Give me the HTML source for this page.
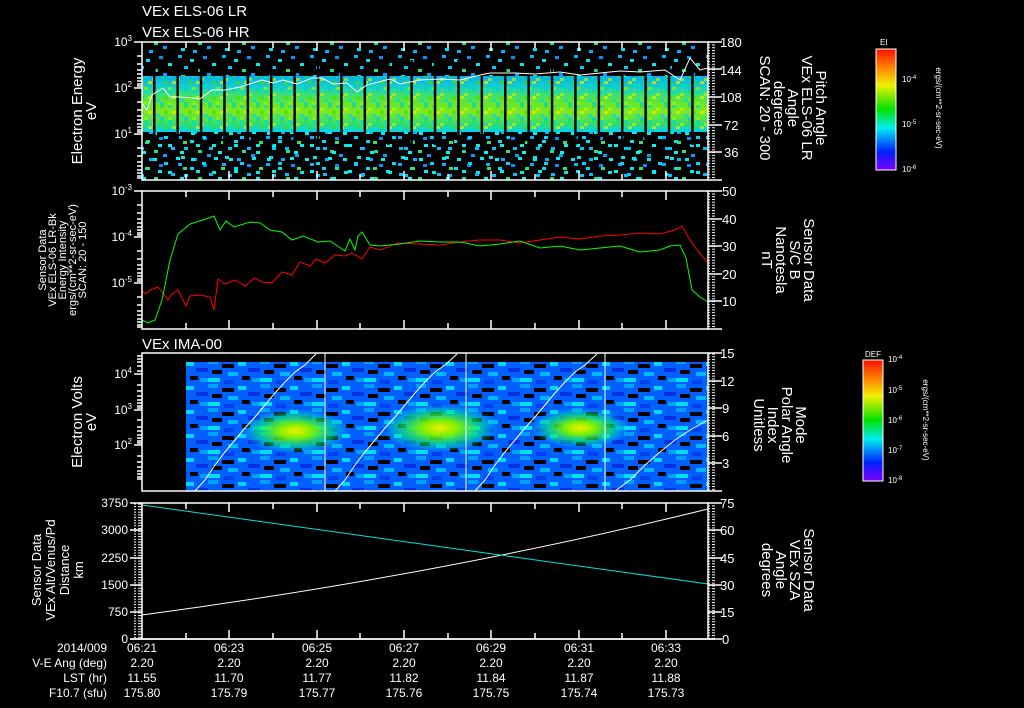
<!DOCTYPE html>
<html><head><meta charset="utf-8"><style>
html,body{margin:0;padding:0;background:#000;width:1024px;height:708px;overflow:hidden}
svg{display:block}
text{font-family:"Liberation Sans",sans-serif;fill:#fff}
</style></head><body>
<svg width="1024" height="708" viewBox="0 0 1024 708" xmlns="http://www.w3.org/2000/svg">
<defs>
<pattern id="spk" width="44" height="27" patternUnits="userSpaceOnUse">
<rect x="2" y="1" width="4" height="3" fill="#00b4ff"/><rect x="14" y="5" width="4" height="3" fill="#00e0f0"/>
<rect x="27" y="2" width="4" height="3" fill="#0090ff"/><rect x="36" y="9" width="4" height="3" fill="#00f0e0"/>
<rect x="8" y="12" width="4" height="3" fill="#00c8ff"/><rect x="22" y="15" width="4" height="3" fill="#20e080"/>
<rect x="31" y="19" width="4" height="3" fill="#00a0ff"/><rect x="5" y="21" width="4" height="3" fill="#00e8e8"/>
<rect x="17" y="23" width="4" height="3" fill="#00b0ff"/>
</pattern>
<pattern id="spk2" width="38" height="26" patternUnits="userSpaceOnUse">
<rect x="1" y="2" width="4" height="3" fill="#00f0f0"/><rect x="12" y="6" width="4" height="3" fill="#00d8ff"/>
<rect x="24" y="1" width="4" height="3" fill="#00f0e8"/><rect x="31" y="11" width="4" height="3" fill="#30e070"/>
<rect x="6" y="14" width="4" height="3" fill="#00f0f0"/><rect x="19" y="17" width="4" height="3" fill="#00c0ff"/>
<rect x="28" y="21" width="4" height="3" fill="#00f8f0"/>
</pattern>
<linearGradient id="band" x1="0" y1="0" x2="0" y2="1">
<stop offset="0" stop-color="#00b0f0"/><stop offset="0.25" stop-color="#20d8b0"/><stop offset="0.45" stop-color="#60e830"/>
<stop offset="0.65" stop-color="#80e820"/><stop offset="0.85" stop-color="#30e070"/><stop offset="1" stop-color="#00d0f0"/>
</linearGradient>
<pattern id="gspk" width="24" height="15" patternUnits="userSpaceOnUse">
<rect x="0" y="0" width="4" height="3" fill="#00e0c0"/><rect x="8" y="3" width="4" height="3" fill="#c0f000"/>
<rect x="16" y="0" width="4" height="3" fill="#20d860"/><rect x="4" y="6" width="4" height="3" fill="#e0f000"/>
<rect x="12" y="9" width="4" height="3" fill="#00d8e0"/><rect x="20" y="6" width="4" height="3" fill="#40e000"/>
<rect x="0" y="12" width="4" height="3" fill="#a0f000"/><rect x="16" y="12" width="4" height="3" fill="#00c8f0"/>
</pattern>
<pattern id="stripe" width="23.4" height="10" patternUnits="userSpaceOnUse" x="153">
<rect x="0" y="0" width="2.5" height="10" fill="#000"/>
</pattern>
<pattern id="ima" width="52" height="24" patternUnits="userSpaceOnUse">
<rect width="52" height="24" fill="#0060ff"/>
<rect x="0" y="0" width="10" height="4" fill="#00a0ff"/><rect x="14" y="4" width="12" height="4" fill="#000"/>
<rect x="30" y="2" width="8" height="4" fill="#00d8ff"/><rect x="40" y="8" width="12" height="4" fill="#0030e0"/>
<rect x="4" y="10" width="10" height="4" fill="#000"/><rect x="20" y="12" width="10" height="4" fill="#00b8ff"/>
<rect x="34" y="16" width="8" height="4" fill="#000"/><rect x="0" y="18" width="12" height="4" fill="#00e0f0"/>
<rect x="16" y="20" width="10" height="4" fill="#0040f0"/><rect x="44" y="18" width="8" height="4" fill="#00a0ff"/>
</pattern>
<radialGradient id="blob">
<stop offset="0" stop-color="#f0f000"/><stop offset="0.3" stop-color="#80f000"/><stop offset="0.7" stop-color="#00f080" stop-opacity="0.6"/><stop offset="1" stop-color="#00e0ff" stop-opacity="0"/>
</radialGradient>
<linearGradient id="cbar" x1="0" y1="0" x2="0" y2="1">
<stop offset="0" stop-color="#ff1000"/><stop offset="0.15" stop-color="#ff8000"/><stop offset="0.3" stop-color="#f0f000"/>
<stop offset="0.5" stop-color="#00e000"/><stop offset="0.65" stop-color="#00f0f0"/><stop offset="0.85" stop-color="#0020ff"/><stop offset="1" stop-color="#8000ff"/>
</linearGradient>
<pattern id="rt" width="8" height="2.76" patternUnits="userSpaceOnUse" y="0.3">
<rect x="0" y="0" width="6" height="1" fill="#fff"/>
</pattern>
<pattern id="lt" width="8" height="2.72" patternUnits="userSpaceOnUse" y="0.3">
<rect x="2" y="0" width="6" height="1" fill="#fff"/>
</pattern>
</defs>

<text x="142" y="16" font-size="15">VEx ELS-06 LR</text>
<text x="142" y="37" font-size="15">VEx ELS-06 HR</text>

<!-- PANEL 1 -->
<rect x="142" y="42" width="566" height="138" fill="url(#spk)"/>
<rect x="142" y="118" width="566" height="62" fill="url(#spk2)"/>
<rect x="142" y="76" width="566" height="56" fill="url(#band)"/>
<rect x="142" y="76" width="566" height="56" fill="url(#gspk)" opacity="0.7"/>
<rect x="142" y="60" width="566" height="85" fill="url(#stripe)"/>
<polyline fill="none" stroke="#fff" stroke-width="1" points="142,103 147,110 152,95 163,88 170,97 180,97 193,98 200,99 212,90 225,90 240,87 262,80 273,83 283,80 297,84 312,78 322,78 333,84 347,83 357,92 367,85 390,79 400,84 420,80 440,79 460,80 480,75 490,73 515,73 535,74 560,72 580,75 600,73 620,71 640,72 665,70 680,80 690,58 700,70 708,68"/>
<rect x="142" y="42" width="566" height="138" fill="none" stroke="#fff" stroke-width="1.5"/>

<!-- PANEL 2 -->
<polyline fill="none" stroke="#f00" stroke-width="1" points="142,291 146,294 150,290 158,287 162,292 168,300 172,294 178,290 186,306 190,296 200,295 210,297 214,310 218,279 225,284 235,280 245,286 255,278 262,282 272,283 282,272 292,275 300,262 310,266 316,259 325,263 335,255 345,256 352,253 362,259 370,247 380,250 398,243 420,244 440,245 460,242 480,240 500,240 520,243 540,240 560,237 580,239 600,236 620,235 640,233 660,234 675,230 682,226 690,240 697,250 708,263"/>
<polyline fill="none" stroke="#0f0" stroke-width="1" points="142,320 148,323 155,320 162,300 170,260 178,234 190,224 206,219 214,216 220,230 226,221 234,227 250,222 260,223 270,230 282,232 292,240 303,236 318,242 330,241 345,251 350,239 355,250 358,236 362,232 370,245 380,246 400,244 420,241 440,242 460,242 480,246 500,244 520,241 540,248 560,246 580,250 600,248 620,246 640,252 660,250 670,246 680,245 686,258 692,290 700,297 708,302"/>
<rect x="142" y="191" width="566" height="138" fill="none" stroke="#fff" stroke-width="1.5"/>

<!-- PANEL 3 -->
<text x="142" y="349" font-size="15">VEx IMA-00</text>
<rect x="186" y="362" width="522" height="129" fill="url(#ima)"/>
<ellipse cx="295" cy="431" rx="55" ry="22" fill="url(#blob)"/>
<ellipse cx="440" cy="428" rx="60" ry="24" fill="url(#blob)"/>
<ellipse cx="580" cy="428" rx="50" ry="20" fill="url(#blob)"/>
<line x1="325" y1="353" x2="325" y2="491" stroke="#fff"/>
<line x1="466" y1="353" x2="466" y2="491" stroke="#fff"/>
<line x1="605" y1="353" x2="605" y2="491" stroke="#fff"/>
<polyline fill="none" stroke="#fff" points="195,491 205,480 215,465 225,452 235,440 245,428 255,417 265,405 275,393 285,382 295,372 305,365 316,354"/>
<polyline fill="none" stroke="#fff" points="335,491 345,480 355,465 365,452 375,440 385,428 395,417 405,405 415,393 425,382 435,372 445,365 457,354"/>
<polyline fill="none" stroke="#fff" points="475,491 485,480 495,465 505,452 515,440 525,428 535,417 545,405 555,393 565,382 575,372 585,365 597,354"/>
<polyline fill="none" stroke="#fff" points="615,491 630,480 645,465 660,452 675,440 690,430 708,420"/>
<rect x="142" y="353" width="566" height="138" fill="none" stroke="#fff" stroke-width="1.5"/>

<!-- PANEL 4 -->
<path d="M142,615 Q440,575 708,509" fill="none" stroke="#fff"/>
<path d="M142,505 Q430,545 708,584" fill="none" stroke="#00e0e0"/>
<rect x="142" y="503" width="566" height="136" fill="none" stroke="#fff" stroke-width="1.5"/>
<rect x="134" y="503" width="8" height="136" fill="url(#lt)"/>

<!-- right minor ticks -->
<rect x="708" y="42" width="7" height="138" fill="url(#rt)"/>
<rect x="708" y="191" width="7" height="138" fill="url(#rt)"/>
<rect x="708" y="353" width="7" height="138" fill="url(#rt)"/>
<rect x="708" y="503" width="7" height="136" fill="url(#rt)"/>

<g stroke="#fff" stroke-width="1.5">
<path d="M186,42v6M229,42v9M273,42v6M317,42v9M360,42v6M404,42v9M448,42v6M491,42v9M535,42v6M579,42v9M622,42v6M666,42v9
M186,180v-6M229,180v-9M273,180v-6M317,180v-9M360,180v-6M404,180v-9M448,180v-6M491,180v-9M535,180v-6M579,180v-9M622,180v-6M666,180v-9"/>
<path d="M186,191v6M229,191v9M273,191v6M317,191v9M360,191v6M404,191v9M448,191v6M491,191v9M535,191v6M579,191v9M622,191v6M666,191v9
M186,329v-6M229,329v-9M273,329v-6M317,329v-9M360,329v-6M404,329v-9M448,329v-6M491,329v-9M535,329v-6M579,329v-9M622,329v-6M666,329v-9"/>
<path d="M186,503v6M229,503v9M273,503v6M317,503v9M360,503v6M404,503v9M448,503v6M491,503v9M535,503v6M579,503v9M622,503v6M666,503v9
M186,639v-6M229,639v-9M273,639v-6M317,639v-9M360,639v-6M404,639v-9M448,639v-6M491,639v-9M535,639v-6M579,639v-9M622,639v-6M666,639v-9"/>
<path d="M134,42h8M134,88h8M134,134h8M137,56h5M137,64h5M137,70h5M137,74h5M137,78h5M137,81h5M137,84h5M137,86h5M137,102h5M137,110h5M137,116h5M137,120h5M137,124h5M137,127h5M137,130h5M137,132h5M137,148h5M137,156h5M137,162h5M137,166h5M137,170h5M137,173h5M137,176h5M137,178h5"/>
<path d="M134,191h8M134,237h8M134,283h8M137,205h5M137,213h5M137,219h5M137,223h5M137,227h5M137,230h5M137,233h5M137,235h5M137,251h5M137,259h5M137,265h5M137,269h5M137,273h5M137,276h5M137,279h5M137,281h5M137,297h5M137,305h5M137,311h5M137,315h5M137,319h5M137,322h5M137,325h5M137,327h5"/>
<path d="M134,374h8M134,410h8M134,445h8M137,356h5M137,359h5M137,362h5M137,366h5M137,371h5M137,385h5M137,391h5M137,396h5M137,400h5M137,403h5M137,406h5M137,408h5M137,420h5M137,427h5M137,431h5M137,435h5M137,438h5M137,441h5M137,443h5M137,456h5M137,462h5M137,467h5M137,471h5M137,474h5M137,477h5M137,479h5"/>
<path d="M130,503h12M130,530h12M130,558h12M130,585h12M130,612h12M130,639h12"/>
<path d="M708,42h14M708,69h14M708,97h14M708,125h14M708,152h14M708,180h14"/>
<path d="M708,191h14M708,219h14M708,246h14M708,274h14M708,301h14M708,329h14"/>
<path d="M708,353h14M708,381h14M708,408h14M708,436h14M708,463h14M708,491h14"/>
<path d="M708,503h14M708,530h14M708,558h14M708,585h14M708,612h14M708,639h14"/>
</g>
<line x1="130" y1="639" x2="715" y2="639" stroke="#fff" stroke-width="1.5"/>

<g font-size="12" text-anchor="end">
<text x="132" y="46">10<tspan dy="-5" font-size="8">3</tspan></text>
<text x="132" y="92">10<tspan dy="-5" font-size="8">2</tspan></text>
<text x="132" y="138">10<tspan dy="-5" font-size="8">1</tspan></text>
<text x="132" y="195">10<tspan dy="-5" font-size="8">-3</tspan></text>
<text x="132" y="241">10<tspan dy="-5" font-size="8">-4</tspan></text>
<text x="132" y="287">10<tspan dy="-5" font-size="8">-5</tspan></text>
<text x="132" y="378">10<tspan dy="-5" font-size="8">4</tspan></text>
<text x="132" y="414">10<tspan dy="-5" font-size="8">3</tspan></text>
<text x="132" y="449">10<tspan dy="-5" font-size="8">2</tspan></text>
<text x="128" y="507">3750</text><text x="128" y="534">3000</text><text x="128" y="562">2250</text>
<text x="128" y="589">1500</text><text x="128" y="616">750</text><text x="128" y="643">0</text>
</g>
<g font-size="13">
<text x="720" y="47">180</text><text x="720" y="75">144</text><text x="720" y="102">108</text><text x="724" y="130">72</text><text x="724" y="157">36</text>
<text x="722" y="196">50</text><text x="722" y="224">40</text><text x="722" y="251">30</text><text x="722" y="279">20</text><text x="722" y="306">10</text>
<text x="720" y="358">15</text><text x="720" y="386">12</text><text x="722" y="413">9</text><text x="722" y="441">6</text><text x="722" y="468">3</text>
<text x="720" y="508">75</text><text x="720" y="535">60</text><text x="720" y="563">45</text><text x="720" y="590">30</text><text x="720" y="617">15</text><text x="722" y="644">0</text>
</g>

<g font-size="15" text-anchor="middle">
<text transform="translate(82,111) rotate(-90)">Electron Energy</text>
<text transform="translate(96,111) rotate(-90)">eV</text>
<text transform="translate(82,422) rotate(-90)">Electron Volts</text>
<text transform="translate(96,422) rotate(-90)">eV</text>
</g>
<g font-size="11" text-anchor="middle">
<text transform="translate(46,260) rotate(-90)" fill="#f00">Sensor Data</text>
<text transform="translate(56,260) rotate(-90)" fill="#f00">VEx ELS-06 LR-Bk</text>
<text transform="translate(66,260) rotate(-90)" fill="#f00">Energy Intensity</text>
<text transform="translate(76,260) rotate(-90)" fill="#f00">ergs/(cm**2-sr-sec-eV)</text>
<text transform="translate(86,260) rotate(-90)" fill="#f00">SCAN: 20 - 150</text>
</g>
<g font-size="13" text-anchor="middle">
<text transform="translate(41,570) rotate(-90)">Sensor Data</text>
<text transform="translate(55,570) rotate(-90)">VEx Alt/Venus/Pd</text>
<text transform="translate(69,570) rotate(-90)">Distance</text>
<text transform="translate(83,570) rotate(-90)">km</text>
</g>

<g font-size="15" text-anchor="middle">
<text transform="translate(816,108) rotate(90)">Pitch Angle</text>
<text transform="translate(802,108) rotate(90)">VEx ELS-06 LR</text>
<text transform="translate(788,108) rotate(90)">Angle</text>
<text transform="translate(774,108) rotate(90)">degrees</text>
<text transform="translate(760,108) rotate(90)">SCAN: 20 - 300</text>
<text transform="translate(796,425) rotate(90)">Mode</text>
<text transform="translate(782,425) rotate(90)">Polar Angle</text>
<text transform="translate(768,425) rotate(90)">Index</text>
<text transform="translate(754,425) rotate(90)">Unitless</text>
<text transform="translate(804,260) rotate(90)" fill="#0f0">Sensor Data</text>
<text transform="translate(790,260) rotate(90)" fill="#0f0">S/C B</text>
<text transform="translate(776,260) rotate(90)" fill="#0f0">Nanotesla</text>
<text transform="translate(762,260) rotate(90)" fill="#0f0">nT</text>
<text transform="translate(804,570) rotate(90)" fill="#00e0e0">Sensor Data</text>
<text transform="translate(790,570) rotate(90)" fill="#00e0e0">VEx SZA</text>
<text transform="translate(776,570) rotate(90)" fill="#00e0e0">Angle</text>
<text transform="translate(762,570) rotate(90)" fill="#00e0e0">degrees</text>
</g>

<text x="880" y="45" font-size="8">EI</text>
<rect x="876" y="49" width="20" height="121" fill="url(#cbar)" stroke="#fff"/>
<g font-size="8"><text x="902" y="82">10<tspan dy="-3" font-size="6">-4</tspan></text><text x="902" y="127">10<tspan dy="-3" font-size="6">-5</tspan></text><text x="902" y="172">10<tspan dy="-3" font-size="6">-6</tspan></text></g>
<text transform="translate(936,108) rotate(90)" font-size="8" text-anchor="middle">ergs/(cm**2-sr-sec-eV)</text>
<text x="865" y="357" font-size="8">DEF</text>
<rect x="863" y="360" width="20" height="121" fill="url(#cbar)" stroke="#fff"/>
<g font-size="8"><text x="888" y="362">10<tspan dy="-3" font-size="6">-4</tspan></text><text x="888" y="393">10<tspan dy="-3" font-size="6">-5</tspan></text><text x="888" y="423">10<tspan dy="-3" font-size="6">-6</tspan></text><text x="888" y="453">10<tspan dy="-3" font-size="6">-7</tspan></text><text x="888" y="483">10<tspan dy="-3" font-size="6">-8</tspan></text></g>
<text transform="translate(923,420) rotate(90)" font-size="8" text-anchor="middle">ergs/(cm**2-sr-sec-eV)</text>

<g font-size="12" text-anchor="end">
<text x="107" y="652">2014/009</text><text x="107" y="667">V-E Ang (deg)</text><text x="107" y="682">LST (hr)</text><text x="107" y="697">F10.7 (sfu)</text>
</g>
<g font-size="12" text-anchor="middle">
<text x="142" y="652">06:21</text><text x="229" y="652">06:23</text><text x="317" y="652">06:25</text><text x="404" y="652">06:27</text><text x="491" y="652">06:29</text><text x="579" y="652">06:31</text><text x="666" y="652">06:33</text>
<text x="142" y="667">2.20</text><text x="229" y="667">2.20</text><text x="317" y="667">2.20</text><text x="404" y="667">2.20</text><text x="491" y="667">2.20</text><text x="579" y="667">2.20</text><text x="666" y="667">2.20</text>
<text x="142" y="682">11.55</text><text x="229" y="682">11.70</text><text x="317" y="682">11.77</text><text x="404" y="682">11.82</text><text x="491" y="682">11.84</text><text x="579" y="682">11.87</text><text x="666" y="682">11.88</text>
<text x="142" y="697">175.80</text><text x="229" y="697">175.79</text><text x="317" y="697">175.77</text><text x="404" y="697">175.76</text><text x="491" y="697">175.75</text><text x="579" y="697">175.74</text><text x="666" y="697">175.73</text>
</g>
</svg>
</body></html>
